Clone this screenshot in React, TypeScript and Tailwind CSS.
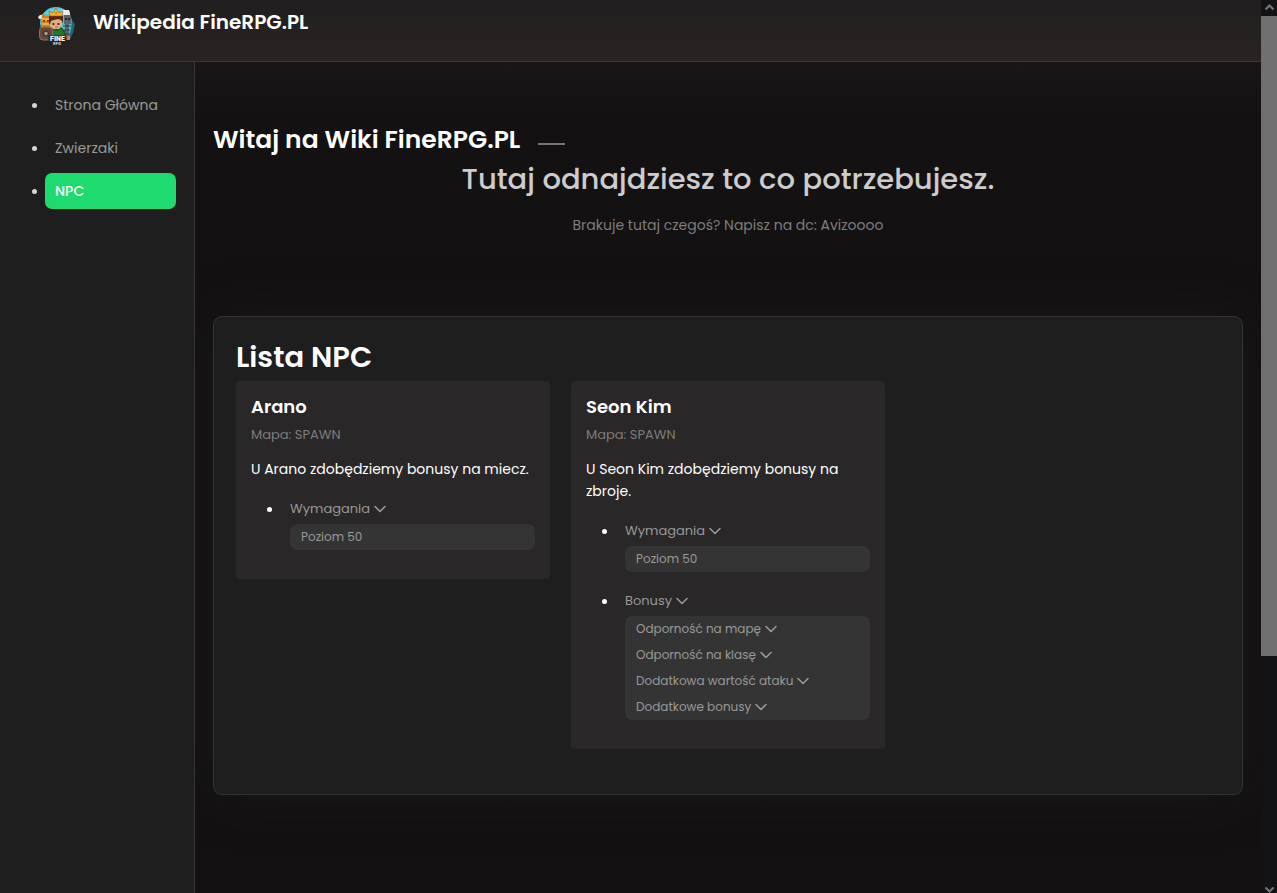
import React from "react";

type Entry = { label: string; expandable: boolean };
type Section = { title: string; entries: Entry[] };
type Npc = { name: string; map: string; description: string; sections: Section[] };

const navigation = [
  { label: "Strona Główna", active: false },
  { label: "Zwierzaki", active: false },
  { label: "NPC", active: true },
];

const requirements: Section = {
  title: "Wymagania",
  entries: [{ label: "Poziom 50", expandable: false }],
};

const npcs: Npc[] = [
  {
    name: "Arano",
    map: "Mapa: SPAWN",
    description: "U Arano zdobędziemy bonusy na miecz.",
    sections: [requirements],
  },
  {
    name: "Seon Kim",
    map: "Mapa: SPAWN",
    description: "U Seon Kim zdobędziemy bonusy na zbroje.",
    sections: [
      requirements,
      {
        title: "Bonusy",
        entries: [
          { label: "Odporność na mapę", expandable: true },
          { label: "Odporność na klasę", expandable: true },
          { label: "Dodatkowa wartość ataku", expandable: true },
          { label: "Dodatkowe bonusy", expandable: true },
        ],
      },
    ],
  },
];

function Chevron() {
  return (
    <svg className="h-2 w-3 shrink-0" viewBox="0 0 12 8" fill="none" stroke="currentColor" strokeWidth="1.6" strokeLinecap="round" strokeLinejoin="round" aria-hidden="true">
      <path d="M1 1.5l5 5 5-5" />
    </svg>
  );
}

function Bullet() {
  return <span className="size-[5px] shrink-0 rounded-full bg-current" aria-hidden="true" />;
}

function Logo() {
  return (
    <svg className="h-10 w-10 shrink-0" viewBox="0 0 40 40" aria-hidden="true">
      <path d="M3 18A16 16 0 0 1 35 16q2 8-3 15L20 34 6 30z" fill="#4fbfd3" />
      <path d="M7 8C12 1 25 0 31 7l-8 2z" fill="#5ed3e6" />
      <path d="M25 4h7l1 3v2h-7zM1 11q2-3 5-2l1 2-1 2H2z" fill="#e6ecec" />
      <path d="M5 8h2l1 2h4l1-2h1v13H4z" fill="#d0801f" />
      <path d="M5 12h8v3H5zM5 17h7v2H5z" fill="#f0b13c" />
      <path d="M6 14h2v1.5H6zm4 0h2v1.5h-2z" fill="#5b3716" />
      <path d="M27 9h7v9h-7z" fill="#5c646a" />
      <path d="M28 12h2v2h-2zm3 0h2v2h-2z" fill="#22272b" />
      <path d="M28 18h4v12h-4z" fill="#59666c" />
      <path d="M26 20h8M27 24h6M28 28h5" stroke="#303b40" strokeWidth="1.2" />
      <path d="M35 14l2 3 1 1-2 9-3 6-1-2 2-8z" fill="#246477" />
      <path d="M13 23l5-2h6l4 4 1 8H14z" fill="#165525" />
      <path d="M16 24l4 1 4-2 3 4v5H16z" fill="#1e7a32" />
      <path d="M13 12h12v8l-3 3h-6l-3-3z" fill="#e5ab80" />
      <path d="M12 10h14v7l-2-3-3-1-4 1-3 1-1 3h-1z" fill="#55291a" />
      <path d="M15.5 17h1.8v2h-1.8zm5 0h1.8v2h-1.8z" fill="#332a26" />
      <path d="M18 21h3" stroke="#a75945" />
      <path d="M12 5l4 2 3-5 3 5 4-2-1 5H13z" fill="#f5b72d" stroke="#96591b" strokeWidth=".6" />
      <path d="M18 7l1-1 1 1-1 1.5z" fill="#e64438" />
      <rect x="2.5" y="21" width="13" height="13" rx="3.5" fill="#69483a" stroke="#8a7464" />
      <circle cx="9" cy="27.500" r="3.200" fill="#4c3329" />
      <circle cx="9" cy="27.500" r="1.700" fill="#a5a4a0" />
      <path d="M28 30h5v4h-5z" fill="#c07d68" />
      <rect x="11.5" y="29.500" width="18" height="5.500" rx="1" fill="#252323" />
      <text x="20.5" y="34.500" textAnchor="middle" fill="#fff" fontFamily="Roboto, sans-serif" fontWeight="900" fontSize="7">FINE</text>
      <text x="20" y="39" textAnchor="middle" fill="#ccc" fontFamily="Roboto, sans-serif" fontWeight="900" fontSize="4">RPG</text>
    </svg>
  );
}

function NpcCard({ npc }: { npc: Npc }) {
  return (
    <article className="rounded-[4px] bg-[#292727] px-[15px] pt-[15px] pb-[29px]">
      <h4 className="text-lg leading-[22px] font-semibold text-white">{npc.name}</h4>
      <p className="mt-1.5 text-[13px] leading-[22px] text-[#7f7d7d]">{npc.map}</p>
      <p className="mt-3 text-[14px] leading-[22px] text-white">{npc.description}</p>
      <ul>
        {npc.sections.map((section) => (
          <li key={section.title} className="mt-[19px] pl-4">
            <div className="flex items-center gap-[18px] text-white">
              <Bullet />
              <button type="button" className="flex items-center gap-1 text-[13px] leading-5 text-[#999]">
                {section.title}
                <Chevron />
              </button>
            </div>
            <ul className="mt-[5px] ml-[23px] rounded-[7px] bg-[#343434] px-[11px] text-xs leading-[26px] text-[#999]">
              {section.entries.map((entry) => (
                <li key={entry.label}>
                  {entry.expandable ? (
                    <button type="button" className="flex items-center gap-1 whitespace-nowrap">
                      {entry.label}
                      <Chevron />
                    </button>
                  ) : (
                    entry.label
                  )}
                </li>
              ))}
            </ul>
          </li>
        ))}
      </ul>
    </article>
  );
}

function ScrollRail() {
  return (
    <div className="flex w-4 shrink-0 flex-col items-center bg-[#131315] text-[#77777a]" aria-hidden="true">
      <svg className="h-4 w-4" viewBox="0 0 16 16" fill="none" stroke="currentColor" strokeWidth="2">
        <path d="M4.5 9.5l4-4 4 4" />
      </svg>
      <div className="w-full grow-[640] basis-0 bg-[#707071]" />
      <div className="grow-[221] basis-0" />
      <svg className="h-4 w-4" viewBox="0 0 16 16" fill="none" stroke="currentColor" strokeWidth="2">
        <path d="M4.5 10.5l4 4 4-4" />
      </svg>
    </div>
  );
}

export default function App() {
  return (
    <div className="flex min-h-screen bg-[#131112] font-['Poppins','Inter',sans-serif]">
      <div className="flex min-w-0 flex-1 flex-col">
        <header className="flex h-[62px] items-start gap-4 border-b border-[#383838] bg-linear-to-b from-[#201e1f] to-[#292422] pt-1.5 pl-[37px]">
          <Logo />
          <h1 className="text-xl leading-8 font-semibold text-white">Wikipedia FineRPG.PL</h1>
        </header>
        <div className="flex flex-1">
          <nav className="w-[195px] shrink-0 border-r border-[#383838] bg-[#1e1e1e] pt-[25px] pr-[18px] pl-8">
            <ul className="flex flex-col gap-[7px]">
              {navigation.map((item) => (
                <li key={item.label} className="flex items-center gap-2 text-[#d6d6d6]">
                  <Bullet />
                  <a
                    href="#"
                    className={
                      item.active
                        ? "flex-1 rounded-[7px] bg-[#1fdb6d] px-2.5 text-[14px] leading-9 font-medium text-white"
                        : "flex-1 rounded-[7px] px-2.5 text-[14px] leading-9 whitespace-nowrap text-[#999]"
                    }
                  >
                    {item.label}
                  </a>
                </li>
              ))}
            </ul>
          </nav>
          <main className="min-w-0 flex-1 overflow-hidden bg-linear-to-b from-[#181617] to-[#131112] to-[60px] px-[18px] pt-[60px] pb-[98px]">
            <div className="flex items-center gap-[18px]">
              <h2 className="text-[25px] leading-9 font-semibold text-white">Witaj na Wiki FineRPG.PL</h2>
              <span className="mt-2 h-0.5 w-[27px] bg-[#767676]" />
            </div>
            <h3 className="mt-0.5 text-center text-[29px] leading-[38px] font-medium text-[#ccc]">
              Tutaj odnajdziesz to co potrzebujesz.
            </h3>
            <p className="mt-4 text-center text-[14px] leading-[22px] text-[#7f7d7d]">
              Brakuje tutaj czegoś? Napisz na dc: Avizoooo
            </p>
            <section className="mt-20 rounded-[9px] border border-[#343434] bg-[#1e1e1e] px-[22px] pt-[22px] pb-[45px] shadow-[0_0_60px_rgba(50,45,45,0.22)]">
              <h3 className="mb-1.5 text-[29px] leading-9 font-semibold text-white">Lista NPC</h3>
              <div className="grid grid-cols-3 items-start gap-[21px]">
                {npcs.map((npc) => (
                  <NpcCard key={npc.name} npc={npc} />
                ))}
              </div>
            </section>
          </main>
        </div>
      </div>
      <ScrollRail />
    </div>
  );
}
